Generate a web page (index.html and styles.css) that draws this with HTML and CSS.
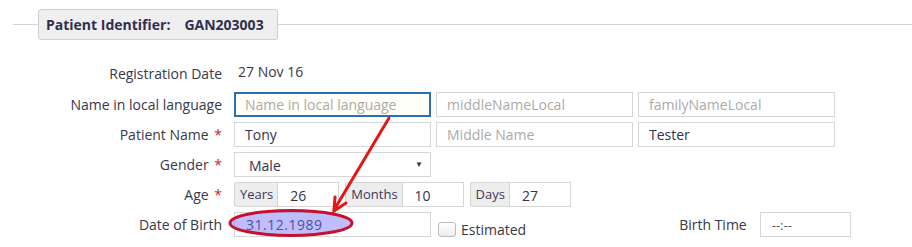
FILE: index.html
```html
<!DOCTYPE html>
<html lang="en">
<head>
  <meta charset="UTF-8" />
  <title>Patient Registration</title>
  <link rel="stylesheet" href="styles.css">
</head>
<body>

  <!-- Patient identifier header -->
  <div class="legend-row">
    <span class="rule short"></span>
    <div class="legend">Patient Identifier:<span class="pid">GAN203003</span></div>
    <span class="rule"></span>
  </div>

  <!-- Registration form -->
  <div class="form">
    <div class="row reg">
      <label>Registration Date</label>
      <span class="value">27 Nov 16</span>
    </div>

    <div class="row">
      <label>Name in local language</label>
      <input class="field focus" type="text" placeholder="Name in local language">
      <input class="field" type="text" placeholder="middleNameLocal">
      <input class="field" type="text" placeholder="familyNameLocal">
    </div>

    <div class="row">
      <label>Patient Name <em>*</em></label>
      <input class="field" type="text" value="Tony">
      <input class="field" type="text" placeholder="Middle Name">
      <input class="field" type="text" value="Tester">
    </div>

    <div class="row">
      <label>Gender <em>*</em></label>
      <div class="field select">Male<span class="caret">&#9660;</span></div>
    </div>

    <div class="row">
      <label>Age <em>*</em></label>
      <div class="group"><span class="addon">Years</span><input class="num" type="text" value="26"></div>
      <div class="group"><span class="addon">Months</span><input class="num" type="text" value="10"></div>
      <div class="group"><span class="addon">Days</span><input class="num" type="text" value="27"></div>
    </div>

    <div class="row">
      <label>Date of Birth</label>
      <input class="field dob" type="text" value="31.12.1989">
      <span class="check"></span>
      <span class="est">Estimated</span>
      <label class="btime">Birth Time</label>
      <input class="time" type="text" value="--:--">
    </div>
  </div>

  <!-- annotation drawn over the form -->
  <svg class="mark" width="912" height="247" viewBox="0 0 912 247">
    <ellipse cx="291" cy="223" rx="61" ry="12.5" fill="rgba(110,110,255,0.45)" stroke="#c8102e" stroke-width="3"/>
    <g stroke="#e01818" stroke-width="3" stroke-linecap="round" fill="none">
      <line x1="389" y1="118" x2="334" y2="210"/>
      <polyline points="346,203 334,211 335,197"/>
    </g>
  </svg>

</body>
</html>
```

FILE: styles.css
```css
* {
  box-sizing: border-box;
}

body {
  margin: 0;
  width: 912px;
  height: 247px;
  position: relative;
  overflow: hidden;
  background: #fff;
  font-family: 'Open Sans', 'Liberation Sans', sans-serif;
  color: #383848;
}

.legend-row {
  display: flex;
  align-items: center;
  padding: 9px 0 0 13px;
}

.rule {
  flex: 1;
  height: 1px;
  background: #d4d4d4;
}

.rule.short {
  flex: 0 0 25px;
}

.legend {
  width: 240px;
  height: 31px;
  padding: 5px 0 0 7px;
  background: #efefef;
  border: 1px solid #cfcfcf;
  border-radius: 3px;
  font-size: 14px;
  font-weight: bold;
  color: #2f2f50;
}

.pid {
  margin-left: 14px;
}

.form {
  padding-top: 22px;
}

.row {
  display: flex;
  align-items: center;
  height: 25px;
  margin-bottom: 5px;
}

.row.reg {
  height: 22px;
  margin-bottom: 8px;
}

label {
  width: 222px;
  margin-right: 12px;
  text-align: right;
  font-size: 14px;
  color: #383848;
}

label em {
  font-style: normal;
  color: #c0282d;
  margin-left: 2px;
}

.value {
  font-size: 14px;
  margin-left: 4px;
  margin-top: -4px;
}

input {
  font-family: inherit;
  outline: none;
}

.field {
  width: 197px;
  height: 25px;
  margin-right: 5px;
  padding: 0 10px;
  border: 1px solid #d6d6d6;
  background: #fff;
  font-size: 14px;
  color: #33334d;
}

.field::placeholder {
  color: #ababab;
}

.field.focus {
  border: 2px solid #2a6fae;
  background: #fffef8;
  padding-left: 9px;
}

.select {
  display: flex;
  align-items: center;
  justify-content: space-between;
  padding: 2px 7px 0 14px;
}

.caret {
  font-size: 8px;
  color: #333;
  margin-top: -4px;
}

.group {
  display: flex;
  height: 25px;
  margin-right: 6px;
}

.addon {
  padding: 2px 4px 0 5px;
  background: #ededed;
  border: 1px solid #d6d6d6;
  border-right: none;
  border-radius: 3px 0 0 3px;
  font-size: 13px;
  color: #3a3a5a;
}

.num {
  width: 62px;
  height: 25px;
  padding: 2px 10px 0 12px;
  border: 1px solid #d6d6d6;
  font-size: 14px;
  color: #33334d;
}

.dob {
  padding-left: 11px;
  font-size: 14px;
  letter-spacing: 0.5px;
  margin-right: 7px;
}

.check {
  width: 18px;
  height: 15px;
  margin-top: 10px;
  border: 1px solid #bcbcbc;
  border-radius: 3px;
  background: linear-gradient(#fff, #ececec);
}

.est {
  font-size: 14px;
  margin: 10px 0 0 5px;
}

.btime {
  width: auto;
  margin: 0 13px 0 153px;
  font-size: 14px;
}

.time {
  width: 91px;
  height: 25px;
  padding: 0 11px;
  border: 1px solid #d6d6d6;
  font-size: 13px;
  color: #555;
}

.mark {
  position: absolute;
  top: 0;
  left: 0;
  pointer-events: none;
}
```
